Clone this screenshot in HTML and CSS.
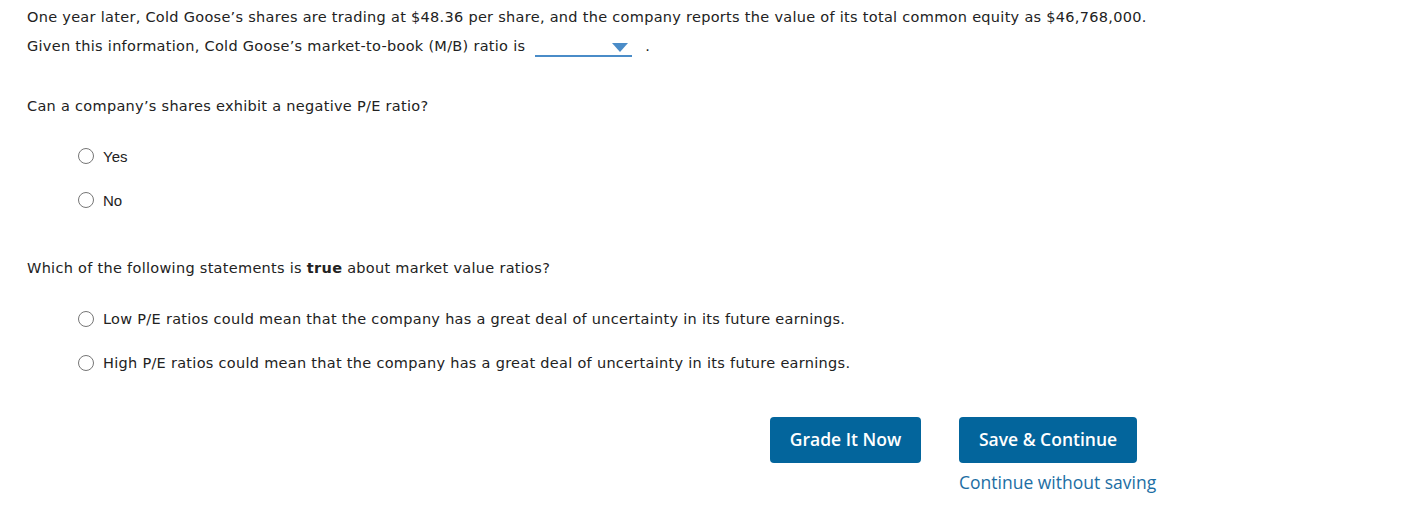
FILE: index.html
```html
<!DOCTYPE html>
<html>
<head>
<meta charset="utf-8">
<link rel="stylesheet" href="styles.css">
</head>
<body>
<div class="page">
  <p class="line first">One year later, Cold Goose’s shares are trading at $48.36 per share, and the company reports the value of its total common equity as $46,768,000.</p>
  <p class="line second">Given this information, Cold Goose’s market-to-book (M/B) ratio is <span class="select"><span class="tri"></span></span> <span class="dot">.</span></p>

  <p class="question q2">Can a company’s shares exhibit a negative P/E ratio?</p>
  <div class="options short">
    <label class="opt"><span class="radio"></span><span class="lbl arial">Yes</span></label>
    <label class="opt"><span class="radio"></span><span class="lbl arial">No</span></label>
  </div>

  <p class="question q3">Which of the following statements is <b>true</b> about market value ratios?</p>
  <div class="options long">
    <label class="opt"><span class="radio"></span><span class="lbl">Low P/E ratios could mean that the company has a great deal of uncertainty in its future earnings.</span></label>
    <label class="opt"><span class="radio"></span><span class="lbl">High P/E ratios could mean that the company has a great deal of uncertainty in its future earnings.</span></label>
  </div>

  <div class="actions">
    <button class="btn grade">Grade It Now</button>
    <div class="save-col">
      <button class="btn save">Save &amp; Continue</button>
      <a class="link">Continue without saving</a>
    </div>
  </div>
</div>
</body>
</html>
```

FILE: styles.css
```css
html, body { margin: 0; padding: 0; background: #fff; }
body {
  font-family: "DejaVu Sans", Verdana, sans-serif;
  font-size: 14.5px;
  letter-spacing: 0.29px;
  color: #222;
}
.page { padding: 0 0 0 27px; }
p { margin: 0; }
.line { line-height: 20px; }
.first { padding-top: 7px; }
.second { margin-top: 9px; }
.select {
  display: inline-block;
  width: 97px;
  height: 18px;
  border-bottom: 2px solid #4a8cc8;
  vertical-align: -6px;
  position: relative;
  margin-left: 5px;
}
.tri {
  position: absolute;
  right: 4px;
  top: 6px;
  width: 0; height: 0;
  border-left: 8px solid transparent;
  border-right: 8px solid transparent;
  border-top: 9px solid #4a8cc8;
}
.dot { margin-left: 8px; }
.question { line-height: 20px; }
.q2 { margin-top: 39px; }
.q3 { margin-top: 48px; }
.options { display: flex; flex-direction: column; padding-left: 51px; }
.short { margin-top: 30px; gap: 24px; }
.long { margin-top: 31px; gap: 24px; }
.opt { display: flex; align-items: center; height: 20px; gap: 9px; }
.radio {
  width: 14px; height: 14px;
  border: 1px solid #767676;
  border-radius: 50%;
  box-sizing: content-box;
  background: #fff;
}
.arial { font-family: "Liberation Sans", Arial, sans-serif; font-size: 15px; letter-spacing: 0; }
.actions {
  display: flex;
  align-items: flex-start;
  gap: 38px;
  margin-top: 44px;
  padding-left: 743px;
}
.btn {
  font-family: "Open Sans", sans-serif;
  font-weight: 600;
  font-size: 17.5px;
  color: #fff;
  background: #03659c;
  border: none;
  border-radius: 4px;
  height: 46px;
  padding: 0 0 2px 0;
  cursor: pointer;
  letter-spacing: 0;
}
.grade { width: 151px; }
.save { width: 178px; }
.save-col { display: flex; flex-direction: column; align-items: flex-start; }
.link {
  font-family: "Open Sans", sans-serif;
  font-size: 17.5px;
  color: #1c6ea4;
  margin-top: 7px;
  line-height: 24px;
  letter-spacing: 0;
}
```
